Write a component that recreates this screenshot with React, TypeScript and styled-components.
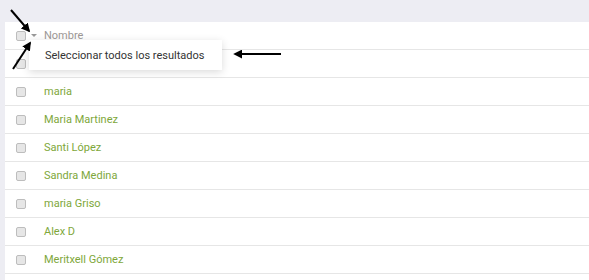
import styled, { createGlobalStyle } from "styled-components";

const names = [
  "",
  "maria",
  "Maria Martinez",
  "Santi López",
  "Sandra Medina",
  "maria Griso",
  "Alex D",
  "Meritxell Gómez",
];

const GlobalStyle = createGlobalStyle`
  body {
    margin: 0;
    background: #ededf3;
    font-family: Roboto, "Liberation Sans", sans-serif;
  }
`;

export default function App() {
  return (
    <>
      <GlobalStyle />
      <Page>
        <Panel>
          <HeaderRow>
            <Checkbox />
            <Caret />
            <HeaderLabel>Nombre</HeaderLabel>
          </HeaderRow>
          {names.map((n, i) => (
            <Row key={i}>
              <Checkbox />
              {n && <Name>{n}</Name>}
            </Row>
          ))}
          <Dropdown>Seleccionar todos los resultados</Dropdown>
        </Panel>
        <Annotations width="589" height="280">
          <defs>
            <marker
              id="head"
              viewBox="0 0 10 10"
              refX="8"
              refY="5"
              markerWidth="4.5"
              markerHeight="4.5"
              orient="auto"
            >
              <path d="M0 0 L10 5 L0 10 z" fill="#000" />
            </marker>
          </defs>
          <line x1="11" y1="10" x2="29" y2="31" stroke="#000" strokeWidth="2" markerEnd="url(#head)" />
          <line x1="13" y1="69" x2="30" y2="43" stroke="#000" strokeWidth="2" markerEnd="url(#head)" />
          <line x1="281" y1="54" x2="235" y2="54" stroke="#000" strokeWidth="2" markerEnd="url(#head)" />
        </Annotations>
      </Page>
    </>
  );
}

const Page = styled.div`
  position: relative;
  height: 280px;
  padding: 22px 0 0 5px;
  box-sizing: border-box;
  overflow: hidden;
`;

const Panel = styled.div`
  position: relative;
  background: #ffffff;
  height: 100%;
`;

const HeaderRow = styled.div`
  display: flex;
  align-items: center;
  height: 27px;
  padding-left: 11px;
  border-bottom: 1px solid #e6e6e6;
`;

const Row = styled(HeaderRow)``;

const Checkbox = styled.span`
  width: 8px;
  height: 8px;
  border: 1px solid #bdbdbd;
  border-radius: 2px;
  background: #e6e6e6;
  flex: none;
`;

const Caret = styled.span`
  margin-left: 5px;
  width: 0;
  height: 0;
  border-left: 3px solid transparent;
  border-right: 3px solid transparent;
  border-top: 3px solid #999;
`;

const HeaderLabel = styled.span`
  margin-left: 7px;
  font-size: 11px;
  color: #9d9896;
`;

const Name = styled.span`
  margin-left: 18px;
  font-size: 11px;
  color: #7ea73a;
`;

const Dropdown = styled.div`
  position: absolute;
  left: 24px;
  top: 18px;
  width: 177px;
  height: 30px;
  padding-left: 16px;
  display: flex;
  align-items: center;
  background: #fff;
  font-size: 11px;
  color: #333;
  box-shadow: 0 2px 8px rgba(0, 0, 0, 0.15);
`;

const Annotations = styled.svg`
  position: absolute;
  left: 0;
  top: 0;
  pointer-events: none;
`;
